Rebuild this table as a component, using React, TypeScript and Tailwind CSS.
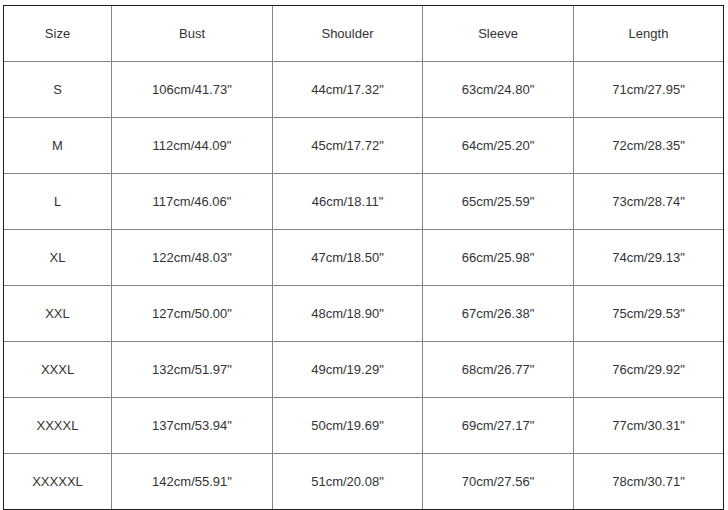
import React from "react";

const header = ["Size", "Bust", "Shoulder", "Sleeve", "Length"];
const rows: string[][] = [
  ["S", "106cm/41.73\"", "44cm/17.32\"", "63cm/24.80\"", "71cm/27.95\""],
  ["M", "112cm/44.09\"", "45cm/17.72\"", "64cm/25.20\"", "72cm/28.35\""],
  ["L", "117cm/46.06\"", "46cm/18.11\"", "65cm/25.59\"", "73cm/28.74\""],
  ["XL", "122cm/48.03\"", "47cm/18.50\"", "66cm/25.98\"", "74cm/29.13\""],
  ["XXL", "127cm/50.00\"", "48cm/18.90\"", "67cm/26.38\"", "75cm/29.53\""],
  ["XXXL", "132cm/51.97\"", "49cm/19.29\"", "68cm/26.77\"", "76cm/29.92\""],
  ["XXXXL", "137cm/53.94\"", "50cm/19.69\"", "69cm/27.17\"", "77cm/30.31\""],
  ["XXXXXL", "142cm/55.91\"", "51cm/20.08\"", "70cm/27.56\"", "78cm/30.71\""],
];

export default function App() {
  const all = [header, ...rows];
  return (
    <div className="w-[728px] h-[510px] bg-white pt-[5px] pl-[3px]" style={{ fontFamily: '"Liberation Sans", Arial, sans-serif' }}>
      <div className="w-[721px] border border-[#1c1c1c]">
        <div className="grid grid-cols-[108px_161px_150px_151px_149px]">
          {all.map((r, ri) =>
            r.map((c, ci) => {
              const lastRow = ri === all.length - 1;
              const lastCol = ci === r.length - 1;
              return (
                <div
                  key={ri + "-" + ci}
                  className={
                    "flex items-center justify-center text-[13px] text-[#333] border-[#858585] " +
                    (lastRow ? "h-[55px] " : "h-[56px] border-b ") +
                    (lastCol ? "" : "border-r")
                  }
                >
                  {c}
                </div>
              );
            })
          )}
        </div>
      </div>
    </div>
  );
}
